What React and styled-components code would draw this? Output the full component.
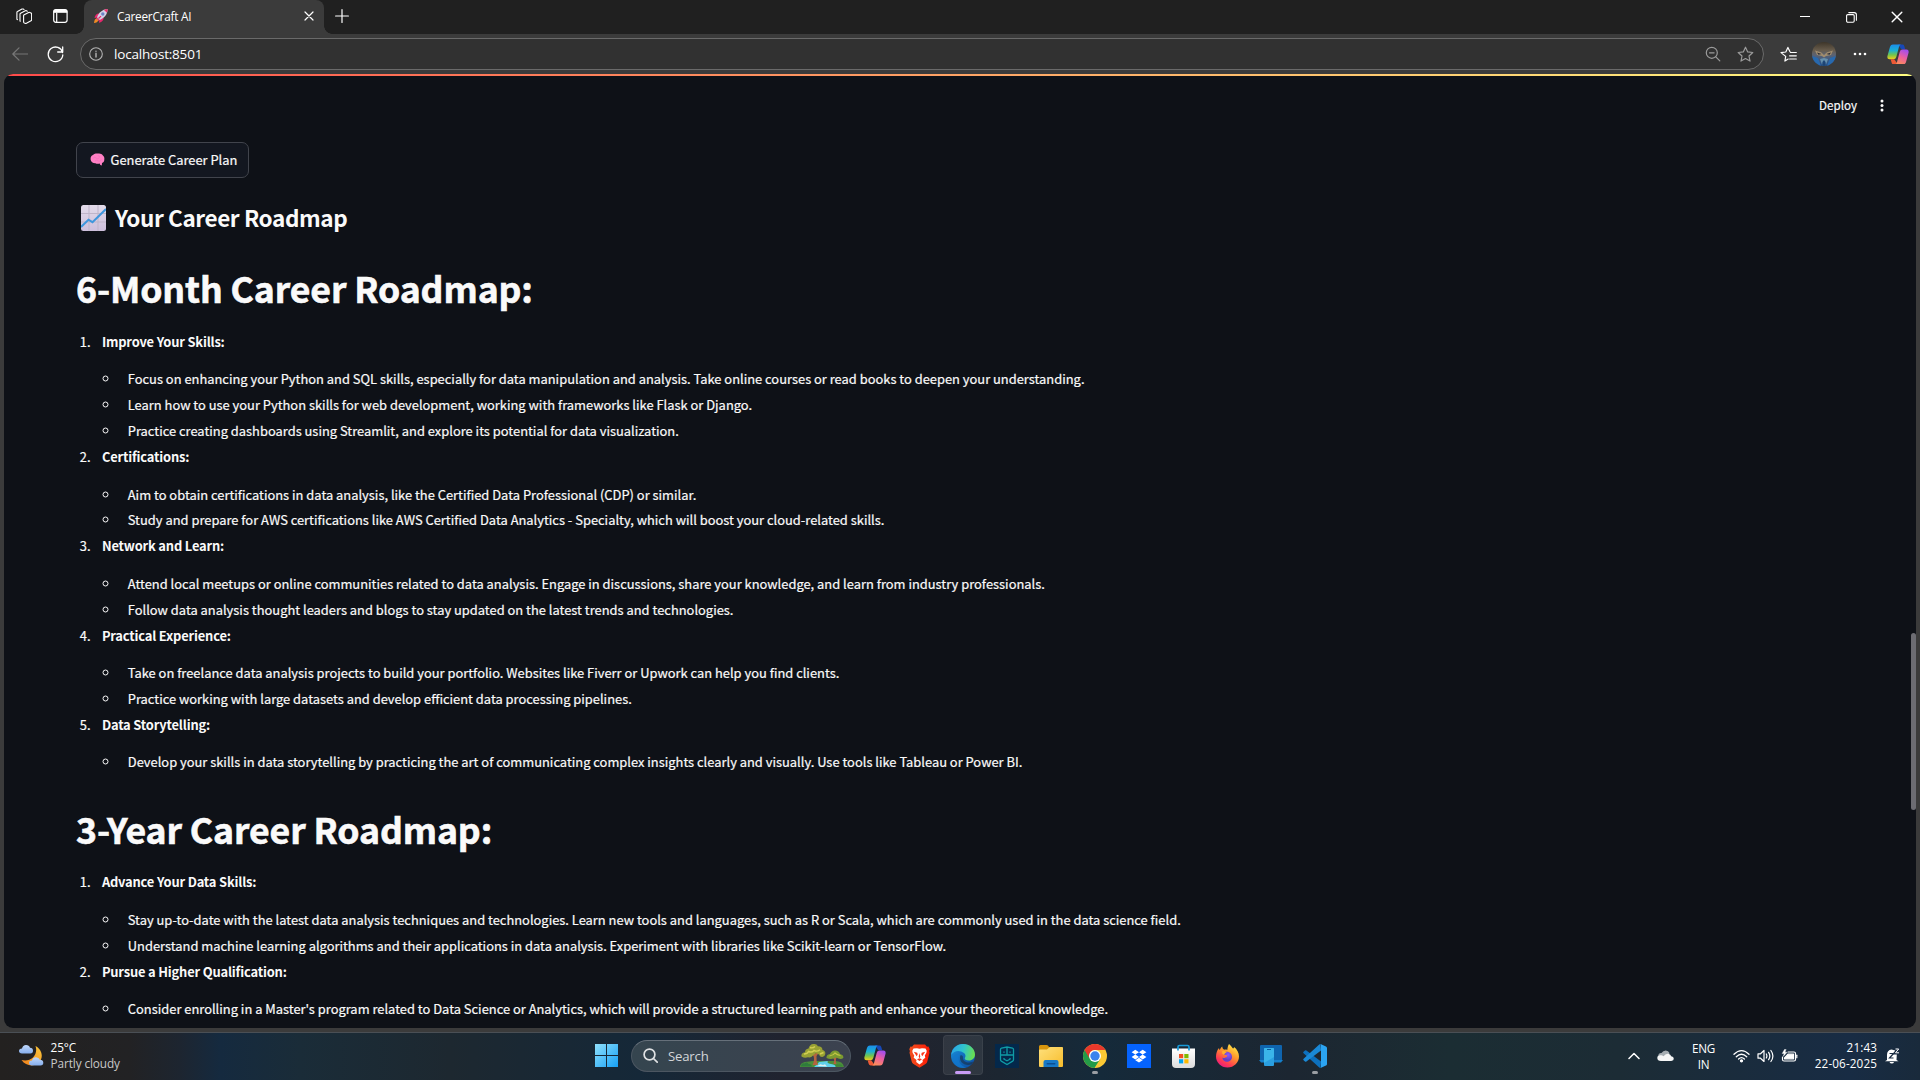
import React from "react";
import styled, { createGlobalStyle } from "styled-components";

const GlobalStyle = createGlobalStyle`
  * { box-sizing: border-box; }
  html, body { margin: 0; padding: 0; background: #3b3b3b; overflow: hidden; }
`;

const uiFont = `"Open Sans", "Noto Sans", sans-serif`;
const pageFont = `"Noto Sans CJK JP", "Noto Sans CJK SC", sans-serif`;

const Desktop = styled.div`
  width: 1920px;
  height: 1080px;
  display: flex;
  flex-direction: column;
  background: #3b3b3b;
  color: #fff;
  font-family: ${uiFont};
`;

/* ---------- browser chrome ---------- */
const TabStrip = styled.div`
  height: 34px;
  flex: none;
  display: flex;
  align-items: stretch;
  background: #202020;
`;
const StripIcons = styled.div`
  width: 84px;
  display: flex;
  align-items: center;
  gap: 21px;
  padding: 0 0 2px 16px;
`;
const Tab = styled.div`
  width: 240px;
  display: flex;
  align-items: center;
  padding: 0 10px 2px 9px;
  background: #3b3b3b;
  border-radius: 8px 8px 0 0;
  position: relative;
  &::before, &::after {
    content: "";
    position: absolute;
    bottom: 0;
    width: 8px;
    height: 8px;
  }
  &::before { left: -8px; background: radial-gradient(circle at 0 0, transparent 7.5px, #3b3b3b 8px); }
  &::after { right: -8px; background: radial-gradient(circle at 100% 0, transparent 7.5px, #3b3b3b 8px); }
`;
const TabTitle = styled.span`
  flex: 1;
  padding-left: 8px;
  font-size: 11.8px;
  letter-spacing: -0.25px;
  white-space: nowrap;
`;
const NewTab = styled.div`
  display: flex;
  align-items: center;
  padding: 0 0 3px 11px;
`;
const WindowButtons = styled.div`
  margin-left: auto;
  display: flex;
  align-items: center;
`;
const WindowButton = styled.div`
  width: 46px;
  display: flex;
  justify-content: center;
`;
const Toolbar = styled.div`
  height: 40px;
  flex: none;
  display: flex;
  align-items: center;
  padding: 0 9px 0 10px;
`;
const ToolIcon = styled.div`
  width: ${(p) => p.$w}px;
  flex: none;
  display: flex;
  justify-content: center;
`;
const AddressBar = styled.div`
  height: 32px;
  width: 1684px;
  flex: none;
  display: flex;
  align-items: center;
  padding: 0 9px 0 8px;
  border: 1px solid #6a6a6a;
  border-radius: 16px;
  background: #313131;
`;
const Url = styled.span`
  flex: 1;
  padding-left: 11px;
  font-size: 13.5px;
  letter-spacing: -0.2px;
`;
const AddressIcons = styled.div`
  display: flex;
  gap: 16px;
`;

/* ---------- page ---------- */
const Viewport = styled.main`
  height: 954px;
  flex: none;
  margin: 0 4px;
  display: flex;
  border-radius: 9px;
  overflow: hidden;
  background: #0e1117;
  color: #fafafa;
  font-family: ${pageFont};
  -webkit-text-stroke: 0.2px #fafafa;
  position: relative;
`;
const Decoration = styled.div`
  position: absolute;
  inset: 0 0 auto 0;
  height: 2px;
  background: linear-gradient(90deg, #ff4b4b, #fffd80);
`;
const Page = styled.div`
  flex: 1;
  display: flex;
  flex-direction: column;
`;
const Header = styled.header`
  height: 64px;
  flex: none;
  display: flex;
  align-items: center;
  justify-content: flex-end;
  gap: 23px;
  padding: 0 32px 2px 0;
  font-size: 11.6px;
`;
const Block = styled.section`
  display: flex;
  flex-direction: column;
  align-items: flex-start;
  padding: 4px 0 0 72px;
`;
const PlanButton = styled.button`
  display: flex;
  align-items: center;
  gap: 5.5px;
  width: 173px;
  height: 36px;
  padding: 0 0 1.5px 13px;
  border: 1px solid #41444c;
  border-radius: 7px;
  background: #131720;
  color: #fafafa;
  font: 400 12.9px/23px ${pageFont};
  -webkit-text-stroke: 0.2px #fafafa;
  white-space: nowrap;
`;
const SubTitle = styled.h3`
  display: flex;
  align-items: center;
  gap: 9px;
  margin: 18px 0 0;
  padding: 6.4px 0 14px 5px;
  font-size: 22.5px;
  line-height: 30.24px;
  font-weight: 600;
  letter-spacing: -0.4px;
  -webkit-text-stroke: 0;
`;
const SubTitleText = styled.span`
  padding-bottom: 1px;
`;
const Title = styled.h1`
  margin: 0;
  padding: 16.5px 0 15.4px;
  font-size: 35.6px;
  line-height: 47.52px;
  font-weight: 700;
  letter-spacing: -0.1px;
  white-space: nowrap;
  -webkit-text-stroke: 0.6px #fafafa;
`;
const Steps = styled.ol`
  margin: 0 0 11.7px;
  padding: 0;
  font-size: 12.9px;
  line-height: 23.04px;
  display: flow-root;
`;
const Step = styled.li`
  margin: 2.88px 0 2.88px 17.4px;
  padding-left: 8.5px;
`;
const StepName = styled.p`
  margin: 0 0 14.4px;
  font-weight: 700;
  letter-spacing: -0.17px;
  -webkit-text-stroke: 0;
`;
const Details = styled.ul`
  margin: 0;
  padding: 0;
  list-style: circle;
`;
const Detail = styled.li`
  margin: 2.88px 0 2.88px 18px;
  padding-left: 7.9px;
  white-space: nowrap;
`;
const Scroll = styled.div`
  position: absolute;
  right: 0;
  top: 559px;
  width: 5px;
  height: 177px;
  border-radius: 3px;
  background: #6c6c72;
`;

/* ---------- taskbar ---------- */
const Taskbar = styled.footer`
  height: 48px;
  margin-top: auto;
  flex: none;
  display: grid;
  grid-template-columns: 584px 1fr auto;
  align-items: center;
  padding-bottom: 2px;
  border-top: 1px solid #4a4f55;
  background: linear-gradient(90deg, #232120 0, #222224 130px, #1d2530 180px, #152a3f 220px, #1a2c38 300px,
    #1d2830 450px, #152838 640px, #20232f 780px, #20242f 920px, #1c2631 1000px, #152a3a 1100px, #1c2631 1290px,
    #1b2d33 1450px, #1c2c35 1620px, #182c44 1850px, #192a3b 1920px);
`;
const Weather = styled.div`
  display: flex;
  align-items: center;
  gap: 6.5px;
  padding-left: 19px;
`;
const WeatherText = styled.div`
  padding-bottom: 1px;
  font-size: 11.8px;
  line-height: 16px;
  letter-spacing: -0.1px;
  span { display: block; }
  span:last-child { color: #c9c9c9; }
`;
const Apps = styled.div`
  display: flex;
  align-items: center;
`;
const AppSlot = styled.div`
  width: 44px;
  height: 45px;
  display: flex;
  align-items: center;
  justify-content: center;
  position: relative;
  &::before {
    content: "";
    display: ${(p) => (p.$active ? "block" : "none")};
    position: absolute;
    inset: 2px 2px 3px;
    border-radius: 4px;
    background: rgba(255, 255, 255, 0.08);
    border: 1px solid rgba(255, 255, 255, 0.06);
  }
  &::after {
    content: "";
    display: ${(p) => (p.$active || p.$running ? "block" : "none")};
    position: absolute;
    bottom: 4px;
    width: ${(p) => (p.$active ? 16 : 6)}px;
    height: 3px;
    border-radius: 2px;
    background: ${(p) => (p.$active ? "#c79bf5" : "#9a9ea3")};
  }
  svg { position: relative; }
`;
const SearchBox = styled.div`
  width: 220px;
  height: 32px;
  margin: 0 2px 0 3px;
  display: flex;
  align-items: center;
  padding: 0 6px 0 11px;
  border-radius: 16px;
  border: 1px solid #4c5661;
  border-top-color: #66707a;
  background: linear-gradient(90deg, #35454f, #3c424f);
  color: #d3d6d9;
  font-size: 13.2px;
  letter-spacing: -0.2px;
  span { flex: 1; padding-left: 10px; }
`;
const Tray = styled.div`
  display: flex;
  align-items: center;
  padding-right: 20px;
  font-size: 11.7px;
  line-height: 16px;
`;
const Cloudy = styled.div`
  display: flex;
  margin-left: 17px;
`;
const Lang = styled.div`
  width: 25px;
  margin: 0 17px;
  text-align: center;
  letter-spacing: -0.3px;
`;
const Status = styled.div`
  display: flex;
  gap: 7px;
`;
const Clock = styled.div`
  width: 63px;
  margin: 0 8px 0 16px;
  padding-bottom: 1px;
  text-align: right;
  letter-spacing: 0.12px;
  white-space: nowrap;
`;

/* ---------- icons ---------- */
const Line = ({ w = 16, h = w, vb, c = "#fff", sw = 1.2, children }) => (
  <svg width={w} height={h} viewBox={vb || `0 0 ${w} ${h}`} fill="none" stroke={c} strokeWidth={sw} strokeLinecap="round" strokeLinejoin="round">
    {children}
  </svg>
);
const Workspaces = () => (
  <Line w={16} sw={1.1}>
    <path d="M8.2 6.7 12.7 4.4q.5-.2 1 0l1.3.6q.6.3.6.9v6q0 .6-.6.9l-4.600 2.500q-.6.3-1.200 0l-.9-.4q-.7-.4-.7-1V7.600q0-.6.6-.9Z" />
    <path d="M4.300 13.200 4 13V6.100q0-.6.6-.9L9.300 2.800q.6-.3 1.200 0l.8.4" />
    <path d="M1.500 11.600.9 11.200V4.600q0-.7.6-1L6 1.100q.6-.3 1.200 0l.8.4" />
  </Line>
);
const TabActions = () => (
  <Line w={15} h={14} sw={1.2}>
    <rect x=".7" y=".7" width="13.4" height="12.6" rx="2.2" />
    <path d="M1 3.200V2.500Q1.200 1 2.800 1h9.200q1.600 0 1.800 1.500v.7Z" fill="#fff" />
    <path d="M3.700 4v9" />
  </Line>
);
const Rocket = () => (
  <svg width="16" height="16" viewBox="0 0 16 16">
    <path d="M1 15c.2-2 .8-4 2.6-4.4l1.8 1.7C5 14 3 14.800 1 15Z" fill="#f08a24" />
    <path d="M6.5 5.500C4 5 2 7 1.500 10l3-.5ZM10.500 9.500C11 12 9 14 6 14.800l.4-3.300Z" fill="#e8276d" />
    <path d="M4 9.500C5.500 5 9 1.500 14.600 1.100 14.600 6.500 11 10.500 6.500 12Z" fill="#d6cfe6" />
    <path d="M11 1.900c1.200-.5 2.300-.7 3.600-.8 0 1.300-.2 2.500-.7 3.700Z" fill="#ee2e6c" />
    <path d="m4 9.500-.8 1.200 2 2 1.300-.7Z" fill="#f04a78" />
    <circle cx="9.800" cy="6" r="1.700" fill="#6a84c8" />
    <path d="m5.500 10.500 2.500-2.400" stroke="#e8276d" strokeWidth="1.300" />
  </svg>
);
const Cross = ({ s }) => <Line w={s} vb="0 0 10 10" sw={1.2}><path d="m1 1 8 8m0-8-8 8" /></Line>;
const Star = ({ c }) => (
  <Line w={17} h={17} c={c}><path d="m8.500 1.200 2.200 4.700 5.100.6-3.800 3.500 1 5.100-4.500-2.500L4 15.100l1-5.100L1.200 6.500l5.100-.6Z" /></Line>
);
const Favorites = () => (
  <Line w={17} h={17} sw={1.2}>
    <path d="m4.900 15 .8-4.600L1 6.600l4.800-.6L7.900 1.400l2.100 4.400M10.600 6.500h5.700M9.600 9.800h6.700M9.600 13h6.700M4.900 15l3.300-1.900" />
  </Line>
);
const Avatar = () => (
  <svg width="24" height="24" viewBox="0 0 24 24">
    <defs>
      <clipPath id="face"><circle cx="12" cy="12" r="12" /></clipPath>
      <linearGradient id="faceg" x2="0" y2="1">
        <stop offset="0" stopColor="#3d3529" /><stop offset=".35" stopColor="#695d4d" />
        <stop offset=".55" stopColor="#5a6375" /><stop offset="1" stopColor="#1f4d8c" />
      </linearGradient>
    </defs>
    <g clipPath="url(#face)">
      <rect width="24" height="24" fill="url(#faceg)" />
      <path d="m3 8.500 6 1.800 3 2.700 3-2.700 6-1.800-2 4.500-5 1-2 1.500-2-1.500-5-1Z" fill="#a08c6e" />
      <path d="M5 10.500 9.500 12l-3 .8ZM19 10.500 14.500 12l3 .8Z" fill="#2b2c35" />
      <path d="m0 14 6 2 3 8H0Zm24 0-6 2-3 8h9Z" fill="#2869ae" />
      <path d="m8 17 4-1 4 1-2.500 7h-3Z" fill="#6690ad" />
      <path d="m10.500 20 1.500-2 1.500 2 .5 4h-4Z" fill="#1d4475" />
    </g>
  </svg>
);
const Copilot = ({ id, s = 22 }) => (
  <svg width={s} height={s * 0.95} viewBox="0 0 22 21">
    <defs>
      <linearGradient id={id + "a"} x1="0" y1="0" x2="0" y2="1">
        <stop offset="0" stopColor="#1b8dea" /><stop offset=".4" stopColor="#1bb0d4" />
        <stop offset=".7" stopColor="#72c44c" /><stop offset="1" stopColor="#f5cd1a" />
      </linearGradient>
      <linearGradient id={id + "b"} x1=".7" y1="0" x2=".3" y2="1">
        <stop offset="0" stopColor="#a14df0" /><stop offset=".5" stopColor="#ec5f9f" />
        <stop offset="1" stopColor="#fb8d5a" />
      </linearGradient>
    </defs>
    <path d="M11 .5h4.400q1.400 0 1.900 1.500l1 3.300h-4Z" fill="#1748b8" />
    <path d="M5.800.5h8q-1.300.4-1.700 1.900L9.300 13q-.6 2.400-3 2.400H2.500Q-.3 15.400.4 12L3 2.700Q3.700.5 5.800.5Z" fill={`url(#${id}a)`} />
    <path d="M11 20.500H6.700q-1.500 0-2-1.500l-1.100-3.600h3.600Z" fill="#ee5a36" />
    <path d="M16.200 20.500h-8q1.300-.4 1.700-1.900L12.700 8q.6-2.500 3-2.500h3.800q2.800 0 2.100 3.400L19 18.300q-.7 2.200-2.800 2.200Z" fill={`url(#${id}b)`} />
  </svg>
);
const Brain = () => (
  <svg width="15" height="13" viewBox="0 0 15 13">
    <path d="M.6 6.500C.3 4 1.500 2.500 3 2 4.500.6 6.500.3 8 .6c2-.4 4 .4 4.700 1.600C14.200 3.200 14.600 5 14.300 6.500c.1 1.700-.8 3-2.300 3.500l-.2 2.500-1.500-.5-.6-1.400C8 11 6.500 11 5.500 10.200 3 10.300.8 9 .6 6.500Z" fill="#ff80c4" />
    <path d="M3 5.200q2-2 3.400 0t3-.8M8 2q.2 1.600 2 1.500M5 8q1.500-1.500 3 0t3.500-1.800" stroke="#f56fbd" strokeWidth=".7" fill="none" />
  </svg>
);
const ChartEmoji = () => (
  <svg width="25" height="26" viewBox="0 0 25 26">
    <defs><linearGradient id="ce" x2="0" y2="1"><stop stopColor="#e3dcea" /><stop offset="1" stopColor="#cdbfdc" /></linearGradient></defs>
    <rect width="25" height="26" rx="2.500" fill="url(#ce)" />
    <path d="M8 0v26M17 0v26M0 8.500h25M0 17h25" stroke="#bfb5c9" strokeWidth="1" />
    <path d="m0 22 7.500-7.300 4 2.500L25 4" stroke="#3f97dd" strokeWidth="2" fill="none" />
  </svg>
);
const Moon = () => (
  <svg width="25" height="23" viewBox="0 0 25 23">
    <defs>
      <linearGradient id="mo" x1="1" y1="0" x2="0" y2="1"><stop stopColor="#fcc93c" /><stop offset="1" stopColor="#ef7d19" /></linearGradient>
      <linearGradient id="cl" x2="0" y2="1"><stop stopColor="#c0d8fb" /><stop offset="1" stopColor="#86aeec" /></linearGradient>
    </defs>
    <path d="M16.500 2c5 2.500 7.700 8.500 5.500 13.500C19 22.500 8 24 2.500 16c4 .8 8.500.5 11.500-2.500s4-7.500 2.500-11.500Z" fill="url(#mo)" />
    <path d="M3 9.500Q0 9.300 0 7t3-2.500Q3.800 1 7 1t4 2.800q3 .2 3 3t-2.800 2.700Z" fill="url(#cl)" />
    <path d="M13 21.500q-3-.2-3-2.600t3-2.400q1-3.200 4-3.200t3.800 2.500q3.500.2 3.500 3t-3 2.700Z" fill="url(#cl)" />
  </svg>
);
const Windows = () => (
  <svg width="23" height="23" viewBox="0 0 23 23">
    <defs><linearGradient id="wi" gradientUnits="userSpaceOnUse" x1="0" y1="0" x2="23" y2="23"><stop stopColor="#8fe0fb" /><stop offset="1" stopColor="#16a0f5" /></linearGradient></defs>
    <path fill="url(#wi)" d="M0 0h11v11H0zM12 0h11v11H12zM0 12h11v11H0zM12 12h11v11H12z" />
  </svg>
);
const Landscape = () => (
  <svg width="44" height="25" viewBox="0 0 44 25">
    <path d="M0 24q0-4 5-5l8-1h22q8 0 9 6Z" fill="#4c8f3a" />
    <path d="M14 24q4-3 5-5l9-1q-2 2 3 3t5 3Z" fill="#5fd0ea" />
    <path d="M12.500 22q2.500-5 1-9L9 9l5 2 6-3-3.500 5q-.5 5 1.500 9ZM33.500 21q1.200-3 .5-5l-3-3 4 1 3-2-2 4q-.6 3 .5 5Z" fill="#b5633f" />
    <path d="M1.500 13.500q-.8-3.500 3.500-4.200Q5 6 8.500 5.500 10 .8 13.500 1q3-.5 4.500 2.300 4.500.2 4.500 3.700 3.200.8 2.800 4-.3 2.500-3 3-2.300.2-3.300-2.500l-3-1.500-3 2.500q-2 2.500-5 1.800-3.500 1.200-6.500-.8Z" fill="#98a134" />
    <path d="M4 11q3.500 0 4.500-2.500Q12 10 14 7.500q3 1.500 6-.8M10 4.500q3 1 5-1M20 11l3.500-1.500" stroke="#d3cf52" strokeWidth="1.400" fill="none" />
    <path d="M26.500 15q-.3-3.500 3.500-4Q31.500 7.500 35 7.500q4 0 5 3.500 4 1 3.300 4-2.800 2-7.300-.5-4.500 2.500-9.500.5Z" fill="#7b9a30" />
    <path d="M29.500 13q4-.5 5.500-3 2 2 5.500 2.500" stroke="#c2c443" strokeWidth="1.200" fill="none" />
    <path d="M1 23.500q.5-4 3.500-3 2-2 4 .5 3-.5 3.500 2.500Z" fill="#2f7c3c" /><path d="m17 23 3.500-1.800L23 22l2-.8 2 2.300Z" fill="#dfeeee" />
    <path d="M35 23.500q1-3 3.500-2 3-1 4.500 2Z" fill="#3a8838" />
  </svg>
);
const Brave = () => (
  <svg width="21" height="24" viewBox="0 0 21 24">
    <defs><linearGradient id="br"><stop stopColor="#f2501e" /><stop offset="1" stopColor="#fb1a05" /></linearGradient></defs>
    <path d="M5 .6h11l2 2.200 1.500-.2 1.200 2.600-.6 1.800.4 1.700-2.200 8.800q-.4 1.500-1.800 2.500L10.500 23.700 4.500 20q-1.400-1-1.800-2.500L.5 8.700.9 7 .3 5.200l1.200-2.600 1.500.2Z" fill="url(#br)" />
    <path d="m10.500 4.800 2.500-.6 3.500.3 1.200 2.300-.3 2-1.600 2.600.5 2.400-2.800 2.300.3 1.800-3.300 2.500-3.300-2.500.3-1.800-2.800-2.300.5-2.400L3.600 8.800l-.3-2 1.200-2.300L8 4.200Z" fill="#fff" />
    <path d="m4.800 7.800 3.500.9.4 1.800-1 1.800Zm11.400 0-3.500.9-.4 1.800 1 1.800ZM10.500 9l.8 3.500-.8 2-.8-2ZM8 15.200l2.500-.9 2.500.9-2.500 1.800Z" fill="#f8371c" />
  </svg>
);
const Edge = () => (
  <svg width="24" height="24" viewBox="0 0 24 24">
    <defs>
      <linearGradient id="e1" x1="0" y1=".3" x2="1" y2=".5"><stop stopColor="#2aa5e8" /><stop offset=".5" stopColor="#31c5cb" /><stop offset="1" stopColor="#6be04c" /></linearGradient>
      <linearGradient id="e2" x2=".8" y2="1"><stop stopColor="#1a94e0" /><stop offset="1" stopColor="#0c4fa2" /></linearGradient>
    </defs>
    <circle cx="12" cy="12" r="12" fill="url(#e2)" />
    <path d="M.2 10.800C1 4.500 5.800 0 12 0c7 0 12 5 12 10.500 0 3.500-2.700 6-6 6-3.200 0-4.800-1.500-4.200-2.500 1.200-1.800.8-3.700-.8-5C8.800 5.800 3.200 6.300.2 10.800Z" fill="url(#e1)" />
    <path d="M9.300 11.500C7.500 17.500 13 22.500 20.500 20.500l2-3c-5 2.500-10.800.3-10.500-3.500.1-2.200-1-3.200-2.700-2.500Z" fill="#1c2a3b" opacity=".55" />
    <path d="M9.200 10C5.500 14 8 22 15.500 23.500 8 25.500 2 20.500 2 15q1-5 7.200-5Z" fill="#1278cd" opacity=".75" />
  </svg>
);
const Shield = () => (
  <svg width="24" height="24" viewBox="0 0 24 24">
    <rect width="24" height="24" fill="#04284b" />
    <path d="M5.500 5.500q0-1 1-1.300L12 3l5.500 1.200q1 .3 1 1.300v10.300q0 .8-.8 1.300L12 20.500l-5.700-3.400q-.8-.5-.8-1.300ZM6 11h12M12 4v7M9 7.500v1.200M15 7.500v1.200M9 14v1.200l3 1.600 3-1.600V14" stroke="#0f9ba6" strokeWidth="1.300" fill="none" />
  </svg>
);
const Folder = () => (
  <svg width="24" height="22" viewBox="0 0 24 22">
    <defs><linearGradient id="fo" x2="1" y2="1"><stop stopColor="#fee07c" /><stop offset="1" stopColor="#f8bd2c" /></linearGradient></defs>
    <path d="M0 6V1.500Q0 0 1.500 0h6q1 0 1.700.8L10 2h12q2 0 2 2v3H0Z" fill="#d8960e" />
    <path d="M0 5.500q0-1 1-1h7l2.200-2q.7-.5 1.500-.5H23q1 0 1 1v18q0 1-1 1H1q-1 0-1-1Z" fill="url(#fo)" />
    <path d="M4.500 22v-5q0-2 2-2h11q2 0 2 2v5Z" fill="#1779c8" /><rect x="7.500" y="18" width="9" height="1.600" rx=".8" fill="#0c4f94" />
  </svg>
);
const Chrome = () => (
  <svg width="24" height="24" viewBox="0 0 24 24">
    <circle cx="12" cy="12" r="12" fill="#fcc934" />
    <path d="M12 12 1.600 6A12 12 0 0 0 11.500 24L17.200 15Z" fill="#249b48" />
    <path d="M1.600 6A12 12 0 0 1 22.400 6H12A6 6 0 0 0 6.800 15Z" fill="#e8382b" />
    <circle cx="12" cy="12" r="6" fill="#fff" /><circle cx="12" cy="12" r="4.700" fill="#3b83ed" />
  </svg>
);
const Dropbox = () => (
  <svg width="24" height="24" viewBox="0 0 24 24">
    <rect width="24" height="24" fill="#0563fd" />
    <path fill="#fff" d="m8.300 5.800 3.700 2.400-3.700 2.400-3.700-2.400Zm7.400 0 3.700 2.400-3.700 2.400L12 8.200Zm-7.400 4.800L12 13l-3.700 2.400L4.600 13Zm7.400 0 3.700 2.400-3.700 2.400L12 13ZM12 13.800l3.700 2.400L12 18.600l-3.700-2.400Z" />
  </svg>
);
const Store = () => (
  <svg width="23" height="24" viewBox="0 0 23 24">
    <defs><linearGradient id="st" x2="0" y2="1"><stop stopColor="#fff" /><stop offset="1" stopColor="#dcdcdc" /></linearGradient></defs>
    <path d="M0 4.500h23V20q0 4-4 4H4q-4 0-4-4Z" fill="url(#st)" />
    <path d="M6 6.500V3q0-1.500 1.500-1.500h8Q17 1.500 17 3v3.500" stroke="#189ad8" strokeWidth="1.700" fill="none" />
    <path d="M7 10h4.200v4.200H7z" fill="#f25022" /><path d="M12.300 10h4.200v4.200h-4.200z" fill="#7fba00" />
    <path d="M7 15.200h4.200v4.200H7z" fill="#00a4ef" /><path d="M12.300 15.200h4.200v4.200h-4.200z" fill="#ffb900" />
  </svg>
);
const Firefox = () => (
  <svg width="23" height="24" viewBox="0 0 23 24">
    <defs>
      <linearGradient id="ff" x1=".8" y1="0" x2=".2" y2="1"><stop stopColor="#fff04a" /><stop offset=".4" stopColor="#ff9a2b" /><stop offset=".75" stopColor="#ff3b52" /><stop offset="1" stopColor="#e31587" /></linearGradient>
      <radialGradient id="fp" cx=".6" cy=".3"><stop stopColor="#9059ff" /><stop offset="1" stopColor="#6640c4" /></radialGradient>
    </defs>
    <path d="M13 0c1.500 1 2.500 3 4 4.500 1-.3 1-1.500 1-1.500 3 2 5 6 5 9.500C23 18.500 18 23.500 11.500 23.500S0 18.500 0 12.500C0 9.500 1 6 3 4c0 1 .3 1.700.8 2C4.500 4 5.500 3 6.300 2.500c0 1.800 1 3 2 3.200 1-.2 2.500 0 3 .3C11.500 4 12 1.500 13 0Z" fill="url(#ff)" />
    <path d="M8 8.500c2.500-1.500 8-.5 8 4.500 0 3-2.500 4.800-5 4.800S6.300 16 6.500 13.500c1 1 3 .5 4.500-1 1-1-1-1.500-2-1.700C7.500 10.500 7.200 9.500 8 8.500Z" fill="url(#fp)" />
    <path d="M6.200 7c2-.3 3.300.2 4.600 1.500-1.700.2-2 1-2.800 2.300-.8-.3-1.300-.6-1.800-1.300Z" fill="#ffb02e" />
  </svg>
);
const PhoneLink = () => (
  <svg width="24" height="22" viewBox="0 0 24 22">
    <path d="M1 1q0-1 1-1h20q1 0 1 1v15H1z" fill="#0f64ae" /><path d="M0 15h24l-2 2.500H2Z" fill="#1580cc" />
    <path d="M5 4q0-1 1-1h8q1 0 1 1v16q0 1-1 1H6q-1 0-1-1z" fill="#2a9fe0" /><path d="M5 4q0-1 1-1h8q1 0 1 1v8L5 18Z" fill="#3ab4ea" /><path d="M8 4.500h4" stroke="#0b5b9c" />
  </svg>
);
const Code = () => (
  <svg width="24" height="24" viewBox="0 0 24 24">
    <path d="M17.500 24q-.8 0-1.500-.7L.6 9.300q-.8-.8 0-1.500L2 6.500q.7-.5 1.400 0L18 17.600Z" fill="#0d70bd" />
    <path d="M17.500 0q-.8 0-1.500.7L.6 14.700q-.8.8 0 1.500L2 17.500q.7.5 1.400 0L18 6.400Z" fill="#1a89d6" />
    <path d="M17.500 0 23 2.500q1 .5 1 1.500v16q0 1-1 1.500L17.500 24Q18 23.500 18 22V2Q18 .5 17.500 0Z" fill="#2ba4f2" />
  </svg>
);
const Cloud = () => (
  <svg width="17" height="12" viewBox="0 0 17 12">
    <path d="M2.500 7Q.5 6 2 3.800 3 2.800 4.500 3 6 .5 8.700.5t4 2.800L8 7Z" fill="#a5adb2" />
    <path d="M4 11Q.3 10.800.3 8T3.500 5.300Q5 5 6.500 6.200 8.500 3.200 11.500 3.700q2.200.6 2.700 2.600 2.600.4 2.600 2.500T14.300 11Z" fill="#f5f6f6" />
  </svg>
);
const Bell = () => (
  <svg width="15" height="16" viewBox="0 0 15 16">
    <path d="M2 12V7q0-5 4.500-5.500L12 3l-.5 9 2 1.300H0Z" fill="#fff" /><path d="M4.500 14h4.500q-.5 1.500-2.200 1.500T4.500 14Z" fill="#fff" />
    <path d="M4.500 5.500h4L4.500 10h4" stroke="#1b2d43" strokeWidth="1.200" fill="none" />
    <path d="M10.200 1h3.500l-3.500 4h3.500" stroke="#1b2d43" strokeWidth="3" fill="none" /><path d="M10.500 1h3.200l-3.200 3.800h3.500" stroke="#fff" strokeWidth="1" fill="none" />
  </svg>
);

/* ---------- data ---------- */
const roadmaps = [
  {
    title: "6-Month Career Roadmap:",
    steps: [
      ["Improve Your Skills:", [
        "Focus on enhancing your Python and SQL skills, especially for data manipulation and analysis. Take online courses or read books to deepen your understanding.",
        "Learn how to use your Python skills for web development, working with frameworks like Flask or Django.",
        "Practice creating dashboards using Streamlit, and explore its potential for data visualization.",
      ]],
      ["Certifications:", [
        "Aim to obtain certifications in data analysis, like the Certified Data Professional (CDP) or similar.",
        "Study and prepare for AWS certifications like AWS Certified Data Analytics - Specialty, which will boost your cloud-related skills.",
      ]],
      ["Network and Learn:", [
        "Attend local meetups or online communities related to data analysis. Engage in discussions, share your knowledge, and learn from industry professionals.",
        "Follow data analysis thought leaders and blogs to stay updated on the latest trends and technologies.",
      ]],
      ["Practical Experience:", [
        "Take on freelance data analysis projects to build your portfolio. Websites like Fiverr or Upwork can help you find clients.",
        "Practice working with large datasets and develop efficient data processing pipelines.",
      ]],
      ["Data Storytelling:", [
        "Develop your skills in data storytelling by practicing the art of communicating complex insights clearly and visually. Use tools like Tableau or Power BI.",
      ]],
    ],
  },
  {
    title: "3-Year Career Roadmap:",
    steps: [
      ["Advance Your Data Skills:", [
        "Stay up-to-date with the latest data analysis techniques and technologies. Learn new tools and languages, such as R or Scala, which are commonly used in the data science field.",
        "Understand machine learning algorithms and their applications in data analysis. Experiment with libraries like Scikit-learn or TensorFlow.",
      ]],
      ["Pursue a Higher Qualification:", [
        "Consider enrolling in a Master's program related to Data Science or Analytics, which will provide a structured learning path and enhance your theoretical knowledge.",
      ]],
    ],
  },
];

const apps = [
  { icon: <Copilot id="tc" /> },
  { icon: <Brave /> },
  { icon: <Edge />, active: true },
  { icon: <Shield /> },
  { icon: <Folder /> },
  { icon: <Chrome />, running: true },
  { icon: <Dropbox /> },
  { icon: <Store /> },
  { icon: <Firefox /> },
  { icon: <PhoneLink /> },
  { icon: <Code />, running: true },
];

export default function App() {
  return (
    <Desktop>
      <GlobalStyle />
      <TabStrip>
        <StripIcons><Workspaces /><TabActions /></StripIcons>
        <Tab><Rocket /><TabTitle>CareerCraft AI</TabTitle><Cross s={10} /></Tab>
        <NewTab><Line w={14} sw={1.2}><path d="M7 .6v12.800M.6 7h12.800" /></Line></NewTab>
        <WindowButtons>
          <WindowButton><Line w={10} sw={1}><path d="M0 4.500h10" /></Line></WindowButton>
          <WindowButton>
            <Line w={11} sw={1.1}><rect x=".6" y="2.600" width="7.600" height="7.600" rx="1.200" /><path d="M2.800.6h5.400q2.200 0 2.200 2.200v5.400" /></Line>
          </WindowButton>
          <WindowButton><Cross s={12} /></WindowButton>
        </WindowButtons>
      </TabStrip>
      <Toolbar>
        <ToolIcon $w={20}><Line w={16} h={14} c="#777"><path d="M15.500 7H.8M7 .8.8 7 7 13.200" /></Line></ToolIcon>
        <ToolIcon $w={50}><Line w={17} sw={1.3}><path d="M15.600 6.500A7.300 7.300 0 1 0 15.800 9M15.700 1v5h-5" /></Line></ToolIcon>
        <AddressBar>
          <Line w={14} c="#b5b5b5" sw={1.1}><circle cx="7" cy="7" r="6.300" /><path d="M7 6.300v3.700M7 4.100v.2" strokeWidth="1.400" /></Line>
          <Url>localhost:8501</Url>
          <AddressIcons>
            <Line w={16} c="#9b9b9b"><circle cx="6.800" cy="6.800" r="5.500" /><path d="m10.800 10.800 4 4M4.500 6.800h4.600" /></Line>
            <Star c="#9b9b9b" />
          </AddressIcons>
        </AddressBar>
        <ToolIcon $w={48}><Favorites /></ToolIcon>
        <ToolIcon $w={24}><Avatar /></ToolIcon>
        <ToolIcon $w={48}>
          <svg width="14" height="4" viewBox="0 0 14 4" fill="#fff"><circle cx="2" cy="2" r="1.300" /><circle cx="7" cy="2" r="1.300" /><circle cx="12" cy="2" r="1.300" /></svg>
        </ToolIcon>
        <ToolIcon $w={28}><Copilot id="bc" s={22} /></ToolIcon>
      </Toolbar>
      <Viewport>
        <Page>
          <Header>
            <span>Deploy</span>
            <svg width="4" height="13" viewBox="0 0 4 13" fill="#fafafa"><circle cx="2" cy="2" r="1.500" /><circle cx="2" cy="6.500" r="1.500" /><circle cx="2" cy="11" r="1.500" /></svg>
          </Header>
          <Block>
            <PlanButton><Brain />Generate Career Plan</PlanButton>
            <SubTitle><ChartEmoji /><SubTitleText>Your Career Roadmap</SubTitleText></SubTitle>
            {roadmaps.map((r) => (
              <React.Fragment key={r.title}>
                <Title>{r.title}</Title>
                <Steps>
                  {r.steps.map(([name, details]) => (
                    <Step key={name}>
                      <StepName>{name}</StepName>
                      <Details>{details.map((d) => <Detail key={d}>{d}</Detail>)}</Details>
                    </Step>
                  ))}
                </Steps>
              </React.Fragment>
            ))}
          </Block>
        </Page>
        <Decoration />
        <Scroll />
      </Viewport>
      <Taskbar>
        <Weather>
          <Moon />
          <WeatherText><span>25°C</span><span>Partly cloudy</span></WeatherText>
        </Weather>
        <Apps>
          <AppSlot><Windows /></AppSlot>
          <SearchBox>
            <Line w={15} c="#e0e2e4" sw={1.700}><circle cx="6.500" cy="6.500" r="5.400" /><path d="m10.500 10.500 3.700 3.700" /></Line>
            <span>Search</span>
            <Landscape />
          </SearchBox>
          {apps.map((a, i) => <AppSlot key={i} $active={a.active} $running={a.running}>{a.icon}</AppSlot>)}
        </Apps>
        <Tray>
          <Line w={12} h={8} sw={1.5}><path d="m1 6.500 5-5 5 5" /></Line>
          <Cloudy><Cloud /></Cloudy>
          <Lang>ENG IN</Lang>
          <Status>
            <Line w={17} h={14} sw={1.3}>
              <path d="M1 5.300Q8.500-2 16 5.300M3.300 7.700q5.200-5 10.400 0M5.600 10q2.900-2.700 5.800 0" /><circle cx="8.500" cy="11.800" r="1" fill="#fff" />
            </Line>
            <Line w={17} h={14} sw={1.2}>
              <path d="M1 4.800h2.500L7 1.500v11L3.500 9.200H1ZM9.300 5q1.200 2 0 4M11.600 3.300q2.500 3.700 0 7.400M13.900 1.500q4 5.500 0 11" />
            </Line>
            <Line w={17} h={14} sw={1.2}>
              <path d="M7 3h6q1.500 0 1.500 1.500v6q0 1.500-1.500 1.500H3q-1.500 0-1.500-1.500V8" /><path d="M7 5.200h5.500v4.600h-9V9Z" fill="#fff" /><path d="M15.800 6.200v2.500" /><path d="M3.500.5 1.200 4.500h2L2.200 7.500 6 3.300H4L5 .5Z" fill="#fff" strokeWidth=".4" />
            </Line>
          </Status>
          <Clock>21:43<br />22-06-2025</Clock>
          <Bell />
        </Tray>
      </Taskbar>
    </Desktop>
  );
}
